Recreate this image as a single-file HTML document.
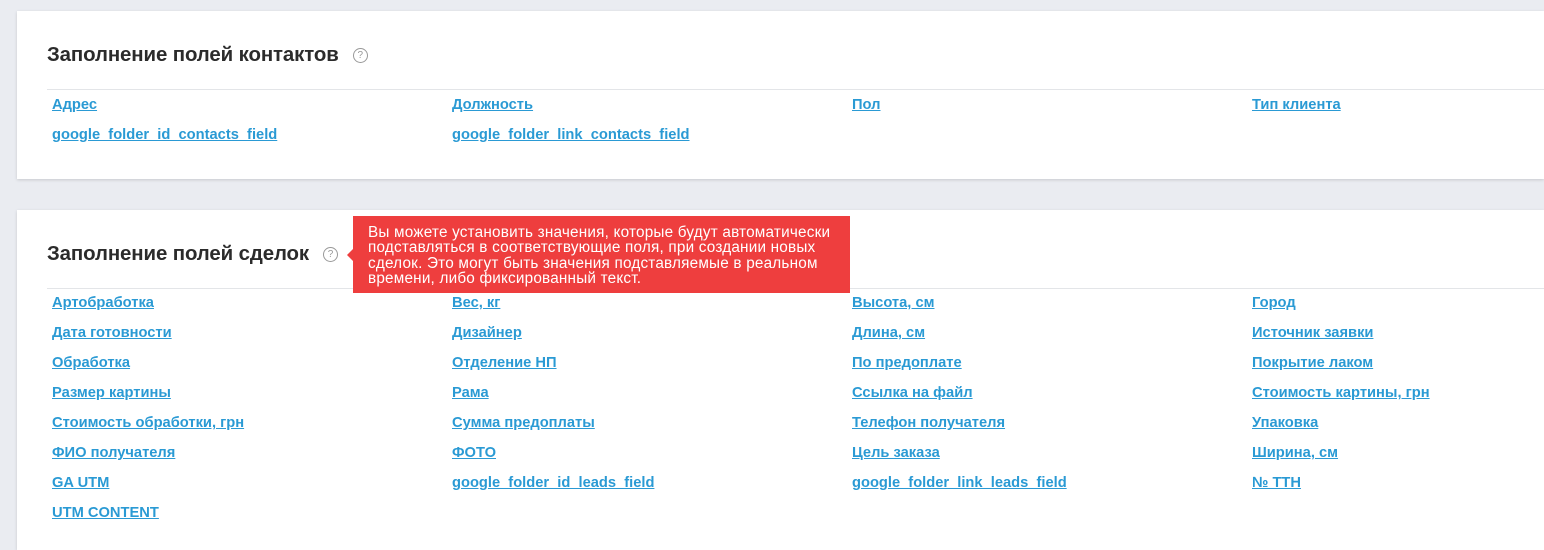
<!DOCTYPE html>
<html><head><meta charset="utf-8"><style>
body{margin:0;width:1544px;height:537px;background:#eaecf1;font-family:"Liberation Sans",sans-serif;overflow:hidden;position:relative}
.card{position:absolute;left:17px;right:0;background:#fff;box-shadow:0 1px 3px rgba(0,0,0,.15)}
h2{position:absolute;left:30px;margin:0;font-size:20.4px;font-weight:bold;color:#2b2b2b;letter-spacing:-0.1px}
.q{display:inline-block;width:13px;height:13px;border:1.5px solid #999;border-radius:50%;font-size:10px;line-height:13px;text-align:center;color:#999;vertical-align:3px;margin-left:14px;font-weight:normal}
.hr{position:absolute;left:30px;right:0;height:1px;background:#e3e5e8}
a{position:absolute;color:#2a9ad4;font-size:14.7px;font-weight:bold;text-decoration:underline;white-space:nowrap}
.tip{position:absolute;left:353px;top:216px;width:474px;height:59px;padding:9px 8px 9px 15px;background:#ee3e3e;color:#fff;font-size:15.3px;line-height:15.3px;letter-spacing:0.2px}
.tip:before{content:"";position:absolute;left:-6px;top:33px;border:6px solid transparent;border-left:0;border-right-color:#ee3e3e}
</style></head><body>
<div class="card" style="top:11px;height:168px">
<h2 style="top:33px">Заполнение полей контактов<span class="q">?</span></h2>
<div class="hr" style="top:78px"></div>
<a style="left:35px;top:86px">Адрес</a><a style="left:435px;top:86px">Должность</a><a style="left:835px;top:86px">Пол</a><a style="left:1235px;top:86px">Тип клиента</a>
<a style="left:35px;top:116px">google_folder_id_contacts_field</a><a style="left:435px;top:116px">google_folder_link_contacts_field</a>
</div>
<div class="card" style="top:210px;height:340px">
<h2 style="top:33px">Заполнение полей сделок<span class="q">?</span></h2>
<div class="hr" style="top:78px"></div>
<a style="left:35px;top:85px">Артобработка</a><a style="left:435px;top:85px">Вес, кг</a><a style="left:835px;top:85px">Высота, см</a><a style="left:1235px;top:85px">Город</a>
<a style="left:35px;top:115px">Дата готовности</a><a style="left:435px;top:115px">Дизайнер</a><a style="left:835px;top:115px">Длина, см</a><a style="left:1235px;top:115px">Источник заявки</a>
<a style="left:35px;top:145px">Обработка</a><a style="left:435px;top:145px">Отделение НП</a><a style="left:835px;top:145px">По предоплате</a><a style="left:1235px;top:145px">Покрытие лаком</a>
<a style="left:35px;top:175px">Размер картины</a><a style="left:435px;top:175px">Рама</a><a style="left:835px;top:175px">Ссылка на файл</a><a style="left:1235px;top:175px">Стоимость картины, грн</a>
<a style="left:35px;top:205px">Стоимость обработки, грн</a><a style="left:435px;top:205px">Сумма предоплаты</a><a style="left:835px;top:205px">Телефон получателя</a><a style="left:1235px;top:205px">Упаковка</a>
<a style="left:35px;top:235px">ФИО получателя</a><a style="left:435px;top:235px">ФОТО</a><a style="left:835px;top:235px">Цель заказа</a><a style="left:1235px;top:235px">Ширина, см</a>
<a style="left:35px;top:265px">GA UTM</a><a style="left:435px;top:265px">google_folder_id_leads_field</a><a style="left:835px;top:265px">google_folder_link_leads_field</a><a style="left:1235px;top:265px">№ ТТН</a>
<a style="left:35px;top:295px">UTM CONTENT</a>
</div>
<div class="tip">Вы можете установить значения, которые будут автоматически подставляться в соответствующие поля, при создании новых сделок. Это могут быть значения подставляемые в реальном времени, либо фиксированный текст.</div>
</body></html>
